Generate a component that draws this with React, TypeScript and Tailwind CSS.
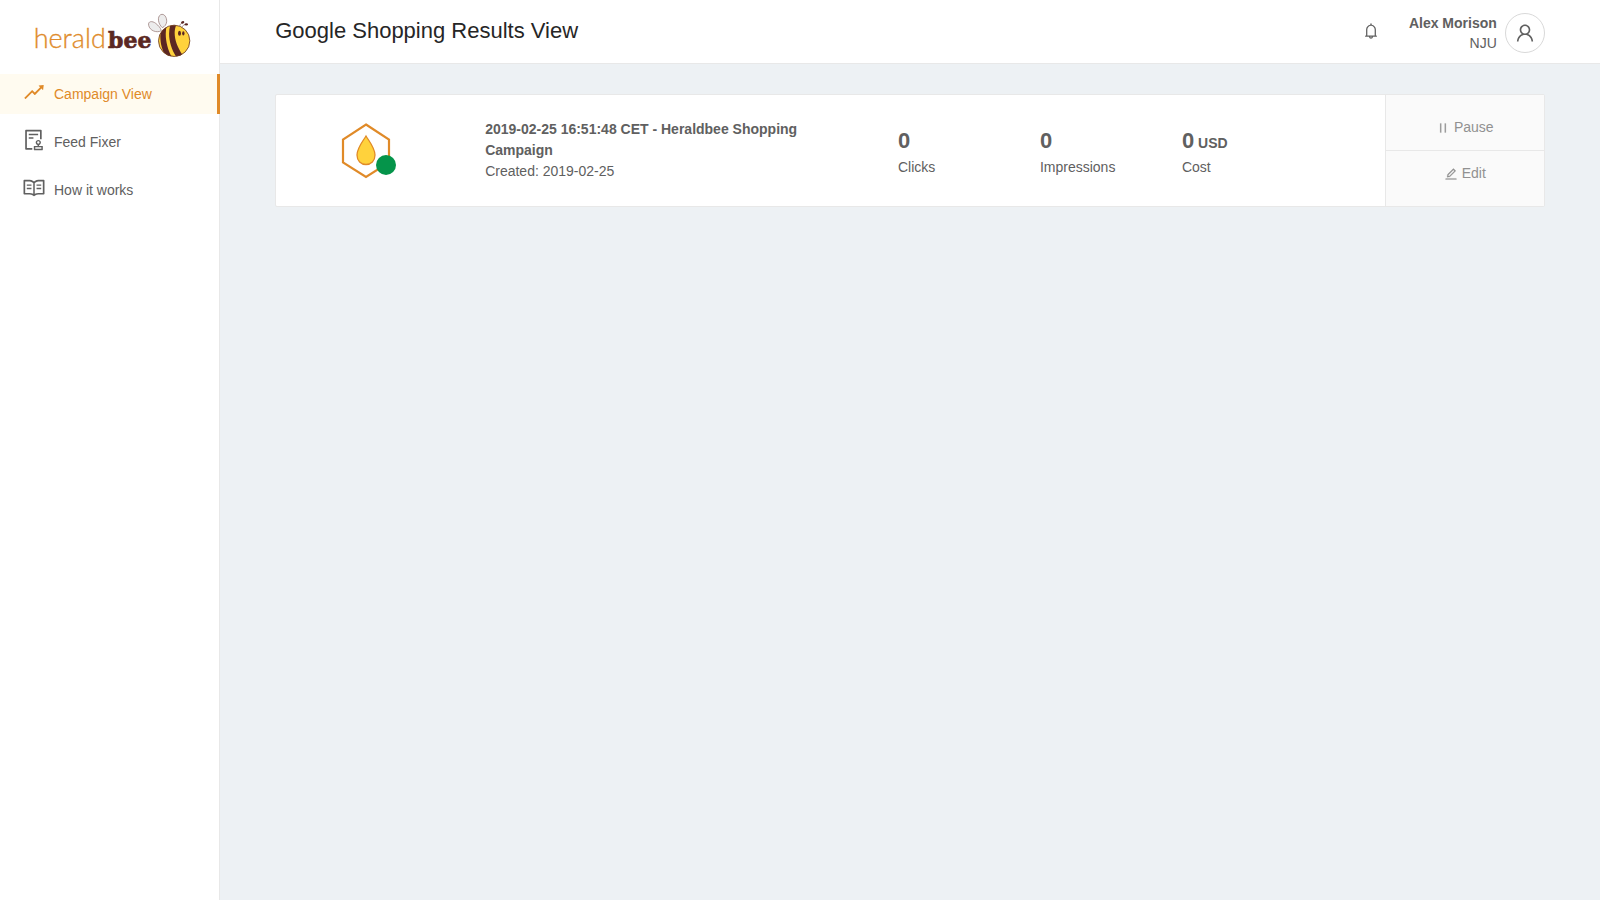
import React from 'react';
import type { IconType } from 'react-icons';
import {
  AiOutlineAudit,
  AiOutlineBell,
  AiOutlineEdit,
  AiOutlinePause,
  AiOutlineRead,
  AiOutlineRise,
  AiOutlineUser,
} from 'react-icons/ai';

interface NavItem {
  label: string;
  icon: IconType;
  active?: boolean;
}

const NAV_ITEMS: NavItem[] = [
  { label: 'Campaign View', icon: AiOutlineRise, active: true },
  { label: 'Feed Fixer', icon: AiOutlineAudit },
  { label: 'How it works', icon: AiOutlineRead },
];

const STATS = [
  { label: 'Clicks', value: '0' },
  { label: 'Impressions', value: '0' },
  { label: 'Cost', value: '0', unit: 'USD' },
];

const Logo = () => (
  <svg width="158" height="47" viewBox="102 36 474 141" role="img" aria-label="heraldbee">
    <text x="101" y="144" fontSize="81" fontWeight="300" fill="#e08c2c" stroke="#e08c2c" strokeWidth="1" fontFamily="Lato, sans-serif">herald</text>
    <text x="324" y="143" fontSize="66" fontWeight="700" fill="#5b2723" stroke="#5b2723" strokeWidth="2" fontFamily="'DejaVu Serif', serif">bee</text>
    {/* wings */}
    <g fill="#ececec" stroke="#8d6c69" strokeWidth="2">
      <path d="M484 92 C470 100 449 92 446 76 C443 63 457 62 467 70 C476 77 482 84 484 92Z" />
      <path d="M487 83 C474 72 471 50 482 44 C493 39 501 53 500 65 C499 74 494 80 487 83Z" />
    </g>
    {/* body */}
    <clipPath id="bee-body">
      <circle cx="522.5" cy="122.500" r="47" />
    </clipPath>
    <circle cx="522.5" cy="122.500" r="47" fill="#ffd23c" />
    <g clipPath="url(#bee-body)" fill="#5b2723">
      <path d="M484 82 L501 74 C492 105 500 145 516 172 L499 170 C482 148 477 110 484 82Z" />
      <path d="M512 72 L530 73 C518 95 524 132 548 165 L530 172 C508 140 502 100 512 72Z" />
    </g>
    <circle cx="522.5" cy="122.500" r="47" fill="none" stroke="#6b3a25" strokeWidth="2.500" />
    {/* antennae and eyes */}
    <path d="M538 80 Q540 71 547 68 M545 82 Q549 74 558 73" fill="none" stroke="#8d6c69" strokeWidth="2" />
    <g fill="#5b2723">
      <ellipse cx="548" cy="67" rx="5" ry="3.500" transform="rotate(-25 548 67)" />
      <ellipse cx="559" cy="73" rx="5" ry="3.500" />
      <ellipse cx="538.5" cy="100" rx="4.500" ry="7.500" />
      <ellipse cx="550" cy="100" rx="3.500" ry="6.500" />
    </g>
  </svg>
);

const CampaignIcon = () => (
  <div className="relative">
    <svg width="50" height="56" viewBox="0 0 50 56" fill="none" aria-hidden="true">
      <path d="M25 1.500 L48 16.500 V39.500 L25 54 L2 39.500 V16.500Z" stroke="#e08a28" strokeWidth="2.200" />
      <path d="M25 13 C28 18 34 25 34 32 C34 38 30 41.500 25 41.500 C20 41.500 16 38 16 32 C16 25 22 18 25 13Z" fill="#ffd23c" stroke="#e08a28" strokeWidth="1.300" />
    </svg>
    <span className="absolute -right-[5px] bottom-1 h-5 w-5 rounded-full bg-[#05944a]" title="Active" />
  </div>
);

const Sidebar = () => (
  <aside className="w-[220px] shrink-0 border-r border-[#e8e8e8] bg-white">
    <a href="#" className="block pt-3 pl-[34px]">
      <Logo />
    </a>
    <nav className="mt-[15px] flex flex-col gap-2">
      {NAV_ITEMS.map(({ label, icon: Icon, active }) => (
        <a
          key={label}
          href="#"
          className={
            active
              ? '-mr-px flex h-10 items-center gap-2 border-r-3 border-[#e08a28] bg-[#fffbf0] pl-[22px] text-[#e08a28]'
              : 'flex h-10 items-center gap-2 pl-[22px] hover:text-[#e08a28]'
          }
        >
          <Icon className="mb-1 h-6 w-6" />
          {label}
        </a>
      ))}
    </nav>
  </aside>
);

const Header = () => (
  <header className="flex h-16 justify-between border-b border-[#e8e8e8] bg-white px-[4%]">
    <h1 className="text-[22px] leading-[62px] text-[#262626]">Google Shopping Results View</h1>
    <div className="flex items-center">
      <button type="button" aria-label="Notifications" className="mr-[29px] mb-0.5">
        <AiOutlineBell className="h-[18px] w-[18px]" />
      </button>
      <div className="mr-2 pt-0.5 text-right leading-5">
        <div className="font-bold">Alex Morison</div>
        <div>NJU</div>
      </div>
      <button
        type="button"
        aria-label="Account"
        className="mt-0.5 flex h-10 w-10 items-center justify-center rounded-full border border-[#d9d9d9]"
      >
        <AiOutlineUser className="h-[22px] w-[22px]" />
      </button>
    </div>
  </header>
);

const CampaignCard = () => (
  <section className="flex rounded-xs border border-[#e8e8e8] bg-white">
    <div className="grid grow grid-cols-[180fr_442fr_142fr_142fr_203fr] items-center">
      <div className="flex justify-center">
        <CampaignIcon />
      </div>
      <div className="pr-[60px] pl-[29px] leading-[21px]">
        <h2 className="font-bold">2019-02-25 16:51:48 CET - Heraldbee Shopping Campaign</h2>
        <p>Created: 2019-02-25</p>
      </div>
      {STATS.map(({ label, value, unit }) => (
        <div key={label} className="pt-1">
          <div className="leading-7 font-bold">
            <span className="text-[22px]">{value}</span>
            {unit && <span> {unit}</span>}
          </div>
          <div className="leading-[21px]">{label}</div>
        </div>
      ))}
    </div>
    <div className="flex w-[159px] shrink-0 flex-col border-l border-[#e8e8e8] bg-[#fafafa] text-[#919191]">
      <button type="button" className="flex h-14 items-center justify-center gap-1 border-b border-[#e8e8e8] pt-2">
        <AiOutlinePause className="mt-0.5 h-3.5 w-3.5 stroke-[16]" />
        Pause
      </button>
      <button type="button" className="flex h-[55px] items-center justify-center gap-1 pb-3">
        <AiOutlineEdit className="mt-0.5 h-3.5 w-3.5 stroke-[16]" />
        Edit
      </button>
    </div>
  </section>
);

const App = () => {
  return (
    <div className="flex min-h-screen bg-[#edf1f4] font-['Liberation_Sans',Arial,sans-serif] text-sm text-[#606060]">
      <Sidebar />
      <div className="min-w-0 grow">
        <Header />
        <main className="px-[4%] pt-[30px]">
          <CampaignCard />
        </main>
      </div>
    </div>
  );
};

export default App;
